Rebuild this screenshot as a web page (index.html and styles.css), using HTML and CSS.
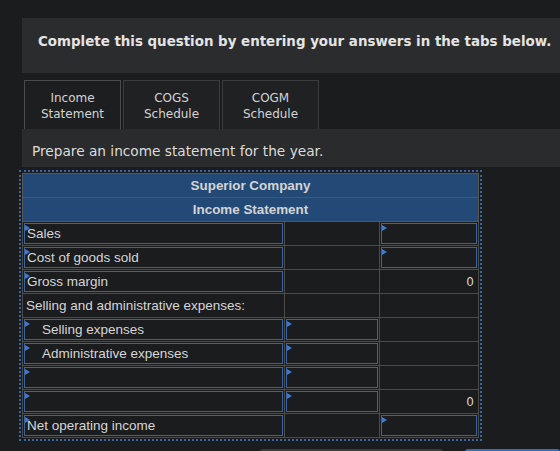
FILE: index.html
```html
<html>
    <head>
        <title> Income Statement </title>
        <link rel="stylesheet" href="styles.css">
    </head>
    <body>
        <div class="content">
            <div class="instructions">
                <p>Complete this question by entering your answers in the tabs below.</p>
            </div>
            <div class="tabs">
                <div class="tab active">Income<br>Statement</div>
                <div class="tab">COGS<br>Schedule</div>
                <div class="tab">COGM<br>Schedule</div>
            </div>
            <div class="panel">
                <p>Prepare an income statement for the year.</p>
            </div>
            <div class="sheet">
                <table class="statement">
                    <tr class="title"><td colspan="3">Superior Company</td></tr>
                    <tr class="title"><td colspan="3">Income Statement</td></tr>
                    <tr>
                        <td><div class="field">Sales</div></td>
                        <td></td>
                        <td><div class="field"></div></td>
                    </tr>
                    <tr>
                        <td><div class="field">Cost of goods sold</div></td>
                        <td></td>
                        <td><div class="field"></div></td>
                    </tr>
                    <tr>
                        <td><div class="field">Gross margin</div></td>
                        <td></td>
                        <td class="amount">0</td>
                    </tr>
                    <tr>
                        <td class="label">Selling and administrative expenses:</td>
                        <td></td>
                        <td></td>
                    </tr>
                    <tr>
                        <td><div class="field indent">Selling expenses</div></td>
                        <td><div class="field"></div></td>
                        <td></td>
                    </tr>
                    <tr>
                        <td><div class="field indent">Administrative expenses</div></td>
                        <td><div class="field"></div></td>
                        <td></td>
                    </tr>
                    <tr>
                        <td><div class="field"></div></td>
                        <td><div class="field"></div></td>
                        <td></td>
                    </tr>
                    <tr>
                        <td><div class="field"></div></td>
                        <td><div class="field"></div></td>
                        <td class="amount">0</td>
                    </tr>
                    <tr>
                        <td><div class="field">Net operating income</div></td>
                        <td></td>
                        <td><div class="field"></div></td>
                    </tr>
                </table>
            </div>
            <div class="actions">
                <div class="btn prev"></div>
                <div class="btn next"></div>
            </div>
        </div>
    </body>
</html>
```

FILE: styles.css
```css
body {
    margin: 0;
    background: #1b1c1e;
    font-family: "DejaVu Sans", Verdana, sans-serif;
    color: #d8d8d8;
    overflow: hidden;
}
.content {
    padding: 18px 0 0 22px;
}
/* Top banner */
.instructions {
    background: #2b2c2e;
    height: 55px;
    padding: 0 0 0 16px;
    box-sizing: border-box;
}
.instructions p {
    margin: 0;
    padding-top: 16px;
    font-size: 13.4px;
    font-weight: bold;
    color: #e4e4e4;
    white-space: nowrap;
}
/* Tabs */
.tabs {
    display: flex;
    gap: 2px;
    margin: 7px 0 0 2px;
}
.tab {
    width: 97px;
    height: 49px;
    box-sizing: border-box;
    border: 1px solid #3b3c3e;
    border-bottom: none;
    background: #202123;
    text-align: center;
    font-size: 12px;
    line-height: 16px;
    padding-top: 9px;
    color: #d4d4d4;
}
.tab.active {
    background: #1d1e20;
    border-color: #4a4b4d;
}
.panel {
    background: #2a2b2d;
    height: 38px;
    box-sizing: border-box;
    padding: 14px 0 0 10px;
}
.panel p {
    margin: 0;
    font-size: 13.7px;
    line-height: 16px;
    color: #dcdcdc;
}
/* Statement table */
.sheet {
    width: max-content;
    margin: 3px 0 0 -3px;
    border: 2px dotted #3a66a6;
    padding: 1px;
}
.statement {
    border-collapse: collapse;
    font-family: "Liberation Sans", Arial, sans-serif;
    font-size: 13.5px;
    color: #d6d6d6;
}
.statement td {
    height: 24px;
    padding: 1px;
    box-sizing: border-box;
    border: 1px solid #4e4b45;
    background: #1b1c1e;
}
.statement td:nth-child(1) {
    width: 262px;
}
.statement td:nth-child(2) {
    width: 95px;
}
.statement td:nth-child(3) {
    width: 99px;
}
.statement tr.title td {
    background: #234a77;
    text-align: center;
    font-weight: bold;
    font-size: 13.4px;
    color: #d4d4d4;
    border-color: #5c5448;
}
.statement td.label {
    padding-left: 3px;
}
.statement td.amount {
    text-align: right;
    padding-right: 4px;
    font-family: "DejaVu Sans", Verdana, sans-serif;
    font-size: 12px;
}
/* Input boxes with the blue corner marker */
.field {
    position: relative;
    height: 19px;
    line-height: 19px;
    border: 1px solid #3a63a0;
    padding-left: 2px;
    white-space: nowrap;
}
.field::before {
    content: "";
    position: absolute;
    left: 0;
    top: 1px;
    border-left: 5px solid #3f7ad0;
    border-top: 3px solid transparent;
    border-bottom: 3px solid transparent;
}
.field.indent {
    padding-left: 17px;
}
/* Partially visible buttons at the bottom */
.actions {
    display: flex;
    margin: 8px 0 0 238px;
    gap: 22px;
}
.btn {
    height: 10px;
    border-radius: 3px 3px 0 0;
}
.btn.prev {
    width: 183px;
    background: #3a3b3d;
}
.btn.next {
    flex: 1;
    background: #2f6fc2;
}
```
